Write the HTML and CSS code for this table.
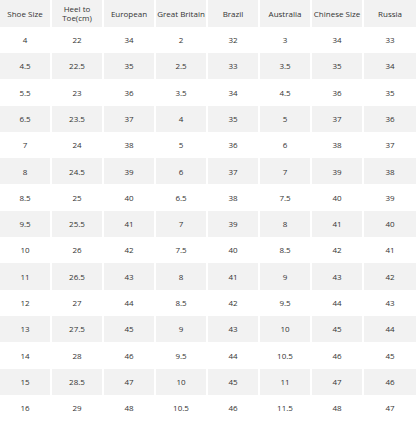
FILE: index.html
```html
<!DOCTYPE html>
<html>
<head>
<meta charset="utf-8">
<link rel="stylesheet" href="styles.css">
</head>
<body>
<table class="size-table">
<thead>
<tr><th>Shoe Size</th><th>Heel to<br>Toe(cm)</th><th>European</th><th>Great Britain</th><th>Brazil</th><th>Australia</th><th>Chinese Size</th><th>Russia</th></tr>
</thead>
<tbody>
<tr><td>4</td><td>22</td><td>34</td><td>2</td><td>32</td><td>3</td><td>34</td><td>33</td></tr>
<tr><td>4.5</td><td>22.5</td><td>35</td><td>2.5</td><td>33</td><td>3.5</td><td>35</td><td>34</td></tr>
<tr><td>5.5</td><td>23</td><td>36</td><td>3.5</td><td>34</td><td>4.5</td><td>36</td><td>35</td></tr>
<tr><td>6.5</td><td>23.5</td><td>37</td><td>4</td><td>35</td><td>5</td><td>37</td><td>36</td></tr>
<tr><td>7</td><td>24</td><td>38</td><td>5</td><td>36</td><td>6</td><td>38</td><td>37</td></tr>
<tr><td>8</td><td>24.5</td><td>39</td><td>6</td><td>37</td><td>7</td><td>39</td><td>38</td></tr>
<tr><td>8.5</td><td>25</td><td>40</td><td>6.5</td><td>38</td><td>7.5</td><td>40</td><td>39</td></tr>
<tr><td>9.5</td><td>25.5</td><td>41</td><td>7</td><td>39</td><td>8</td><td>41</td><td>40</td></tr>
<tr><td>10</td><td>26</td><td>42</td><td>7.5</td><td>40</td><td>8.5</td><td>42</td><td>41</td></tr>
<tr><td>11</td><td>26.5</td><td>43</td><td>8</td><td>41</td><td>9</td><td>43</td><td>42</td></tr>
<tr><td>12</td><td>27</td><td>44</td><td>8.5</td><td>42</td><td>9.5</td><td>44</td><td>43</td></tr>
<tr><td>13</td><td>27.5</td><td>45</td><td>9</td><td>43</td><td>10</td><td>45</td><td>44</td></tr>
<tr><td>14</td><td>28</td><td>46</td><td>9.5</td><td>44</td><td>10.5</td><td>46</td><td>45</td></tr>
<tr><td>15</td><td>28.5</td><td>47</td><td>10</td><td>45</td><td>11</td><td>47</td><td>46</td></tr>
<tr><td>16</td><td>29</td><td>48</td><td>10.5</td><td>46</td><td>11.5</td><td>48</td><td>47</td></tr>
</tbody>
</table>
</body>
</html>
```
FILE: styles.css
```css
html, body {
  margin: 0;
  padding: 0;
  background: #fff;
}
.size-table {
  width: 416px;
  table-layout: fixed;
  border-collapse: separate;
  border-spacing: 0;
  font-family: "Open Sans", sans-serif;
  font-size: 8px;
  color: #333;
}
.size-table th,
.size-table td {
  padding: 0;
  text-align: center;
  vertical-align: middle;
  font-weight: normal;
  line-height: 9.5px;
  border-right: 2px solid #fff;
}
.size-table th:last-child,
.size-table td:last-child {
  border-right: 0;
}
.size-table thead tr {
  height: 26.7px;
  background: #f2f2f2;
}
.size-table tbody tr {
  height: 26.3px;
}
.size-table tbody tr:nth-child(even) {
  background: #f2f2f2;
}
```
